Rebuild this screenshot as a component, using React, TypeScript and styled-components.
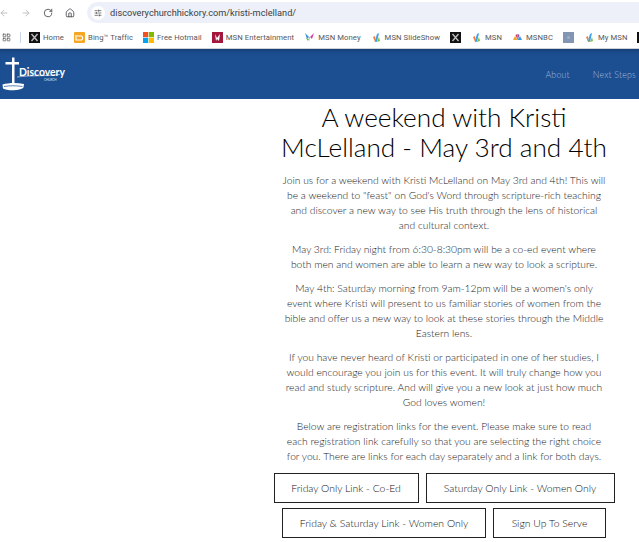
import React from "react";
import styled, { createGlobalStyle } from "styled-components";
import { ArrowLeft, ArrowRight, RotateCw, House, LayoutGrid, SlidersHorizontal } from "lucide-react";

const Global = createGlobalStyle`
  html, body { margin: 0; padding: 0; background: #fff; overflow: hidden; }
  body { font-family: "Lato", "Liberation Sans", sans-serif; }
`;
const Page = styled.div`width: 639px; height: 542px; overflow: hidden;`;
const Toolbar = styled.div`
  display: flex; align-items: center; height: 26px; box-sizing: border-box; background: #fff;
`;
const NavGroup = styled.div`
  display: flex; align-items: center; gap: 10px; width: 89px; margin-left: -2px; box-sizing: border-box; flex: none;
`;
const NavIcon = styled.span<{ $dim?: boolean }>`
  display: flex; width: 12px; justify-content: center; color: ${p => (p.$dim ? "#b4b6ba" : "#45474a")};
`;
const Omnibox = styled.div`
  flex: 1; height: 21px; margin-top: -1px; background: #edf0f9; border-radius: 11px 0 0 11px;
  display: flex; align-items: center; gap: 5px; padding-left: 4px;
  font: 400 9.2px "Roboto", sans-serif; color: #3b3e44;
`;
const SiteBadge = styled.span`
  width: 14px; height: 14px; border-radius: 50%; background: #fff; display: flex; align-items: center; justify-content: center; color: #444;
`;
const Bookmarks = styled.div`
  display: flex; align-items: center; height: 23px; padding-left: 2px; white-space: nowrap; overflow: hidden;
  border-bottom: 1px solid #cfd2d6; box-sizing: border-box; background: #fff;
`;
const Separator = styled.span`width: 1px; height: 11px; background: #c9d8ea; margin: 0 8px 0 9px; flex: none;`;
const Mark = styled.span`
  display: flex; align-items: center; gap: 3px; margin-right: 10px; flex: none;
  font: 400 7.7px "Roboto", sans-serif; letter-spacing: .08px; color: #55575b;
`;
const Favicon = styled.svg`width: 11px; height: 11px; flex: none; display: block;`;
const Header = styled.header`
  height: 50px; background: #1c4f92; display: flex; align-items: center; justify-content: space-between;
  box-shadow: inset 0 5px 5px -4px rgba(0,0,0,.3);
`;
const NavLinks = styled.nav`display: flex; gap: 23px; margin-right: 3px; margin-top: 1px;`;
const NavLink = styled.a`
  font: 300 8.8px "Lato", sans-serif; letter-spacing: .2px; color: #a3b8d8;
`;
const LogoWrap = styled.div`position: relative; width: 70px; height: 50px; flex: none;`;
const LogoWord = styled.span`
  position: absolute; left: 19px; top: 17px; font: 700 10.4px "Lato", sans-serif; color: #fff;
`;
const LogoSub = styled.span`
  position: absolute; left: 44px; top: 29px; font: 400 3px "Lato", sans-serif; color: #dbe5f2;
`;
const Main = styled.main`
  display: grid; grid-template-columns: 269px 350px;
`;
const Content = styled.article`
  grid-column: 2; text-align: center; padding-top: 3px; white-space: nowrap;
`;
const Title = styled.h1`
  margin: 0 0 11px; font: 300 26.2px/30px "Lato", sans-serif; color: #000;
`;
const Para = styled.p`
  margin: 0 0 9px; font: 300 10.3px/15px "Lato", sans-serif; color: #222;
`;
const Buttons = styled.div`
  display: flex; flex-wrap: wrap; justify-content: center; gap: 5px 7px; margin: 0 -5px;
`;
const LinkButton = styled.a<{ $w: number }>`
  box-sizing: border-box; width: ${p => p.$w}px; height: 30px; display: flex; align-items: center; justify-content: center;
  border: 1.5px solid #222; background: #fff;
  font: 300 10.4px "Lato", sans-serif; color: #111;
`;

const XIcon = () => (
  <Favicon viewBox="0 0 11 11"><rect width="11" height="11" fill="#111" /><path d="M2.5 2 L8.5 9 M8.5 2 L2.5 9" stroke="#bbb" strokeWidth="1.4" /></Favicon>
);
const MsnIcon = () => (
  <Favicon viewBox="0 0 11 11">
    <path d="M2 5 L4 10 L5 10 L4 4 Z" fill="#f0803c" /><path d="M4 9 L6 2 L8 1 L6 10 Z" fill="#3aa0e8" /><path d="M6 10 L8 5 L9 9 Z" fill="#7cc04b" />
  </Favicon>
);
const Bing = () => (
  <Favicon viewBox="0 0 11 11"><rect width="11" height="11" rx="1" fill="#f5a623" /><path d="M2 3 V8 H7.5 A2.3 2.3 0 0 0 7.5 4 H3" fill="none" stroke="#fff" strokeWidth="1.2" /></Favicon>
);
const Windows = () => (
  <Favicon viewBox="0 0 11 11"><rect width="5.2" height="5.2" fill="#f25022" /><rect x="5.8" width="5.2" height="5.2" fill="#7fba00" /><rect y="5.8" width="5.2" height="5.2" fill="#00a4ef" /><rect x="5.8" y="5.8" width="5.2" height="5.2" fill="#ffb900" /></Favicon>
);
const Ent = () => (
  <Favicon viewBox="0 0 11 11"><rect width="11" height="11" fill="#a3173d" /><path d="M3 2 L5 6 L8 2 L7 9 L5 7 L4 9 Z" fill="#fff" /></Favicon>
);
const Butterfly = () => (
  <Favicon viewBox="0 0 11 11"><path d="M1 1 L5 5 L3 7 Z" fill="#2f8fe0" /><path d="M10 1 L6 5 L8 7 Z" fill="#d63fa5" /><path d="M5 5 L6 5 L5.5 10 Z" fill="#f2a32c" /><path d="M2 6 L5 7 L4 9 Z" fill="#58b947" /></Favicon>
);
const Nbc = () => (
  <Favicon viewBox="0 0 11 11"><path d="M5.5 8 L1 8 L3 4 Z" fill="#f2a32c" /><path d="M5.5 8 L3.5 3 L5.5 2 Z" fill="#d8344a" /><path d="M5.5 8 L5.8 2 L7.5 3 Z" fill="#7f4fb0" /><path d="M5.5 8 L8 4 L10 8 Z" fill="#3a9ad9" /></Favicon>
);
const Gray = () => (
  <Favicon viewBox="0 0 11 11"><rect width="11" height="11" fill="#8296b4" /><circle cx="5.5" cy="5.5" r="1.5" fill="#9fb0c8" /></Favicon>
);

const Logo = () => (
  <LogoWrap>
    <svg width="70" height="50" viewBox="0 0 70 50" style={{ display: "block" }}>
      <path d="M12 8.5 H14.5 V13 H19 V15.5 H14.5 V35 H12 V15.5 H5.5 V13 H12 Z" fill="#fff" />
      <path d="M17 28 C30 26 45 27.5 60 25.5" stroke="#fff" strokeWidth=".7" fill="none" opacity=".8" />
      <path d="M2.5 35.5 C9 33.5 17 33.5 24 35 L23.5 38.5 C20 42 7 42 3 39.5 Z" fill="#fff" />
      <path d="M4 37.5 C10 36.5 16 36.5 22.5 37.5" stroke="#1c4f92" strokeWidth=".7" fill="none" />
    </svg>
    <LogoWord>Discovery</LogoWord>
    <LogoSub>CHURCH</LogoSub>
  </LogoWrap>
);

export default function App() {
  return (
    <Page>
      <Global />
      <Toolbar>
        <NavGroup>
          <NavIcon $dim><ArrowLeft size={10} /></NavIcon>
          <NavIcon $dim><ArrowRight size={10} /></NavIcon>
          <NavIcon><RotateCw size={10} /></NavIcon>
          <NavIcon><House size={10} /></NavIcon>
        </NavGroup>
        <Omnibox>
          <SiteBadge><SlidersHorizontal size={8} /></SiteBadge>
          discoverychurchhickory.com/kristi-mclelland/
        </Omnibox>
      </Toolbar>
      <Bookmarks>
        <LayoutGrid size={9} color="#555" style={{ flex: "none" }} />
        <Separator />
        <Mark><XIcon />Home</Mark>
        <Mark><Bing />Bing™ Traffic</Mark>
        <Mark><Windows />Free Hotmail</Mark>
        <Mark><Ent />MSN Entertainment</Mark>
        <Mark><Butterfly />MSN Money</Mark>
        <Mark><MsnIcon />MSN SlideShow</Mark>
        <Mark><XIcon /></Mark>
        <Mark><MsnIcon />MSN</Mark>
        <Mark><Nbc />MSNBC</Mark>
        <Mark><Gray /></Mark>
        <Mark><MsnIcon />My MSN</Mark>
        <Mark><XIcon /></Mark>
      </Bookmarks>
      <Header>
        <Logo />
        <NavLinks>
          <NavLink>About</NavLink>
          <NavLink>Next Steps</NavLink>
        </NavLinks>
      </Header>
      <Main>
        <Content>
          <Title>A weekend with Kristi<br />McLelland - May 3rd and 4th</Title>
          <Para>Join us for a weekend with Kristi McLelland on May 3rd and 4th! This will<br />be a weekend to "feast" on God's Word through scripture-rich teaching<br />and discover a new way to see His truth through the lens of historical<br />and cultural context.</Para>
          <Para>May 3rd: Friday night from 6:30-8:30pm will be a co-ed event where<br />both men and women are able to learn a new way to look a scripture.</Para>
          <Para>May 4th: Saturday morning from 9am-12pm will be a women's only<br />event where Kristi will present to us familiar stories of women from the<br />bible and offer us a new way to look at these stories through the Middle<br />Eastern lens.</Para>
          <Para>If you have never heard of Kristi or participated in one of her studies, I<br />would encourage you join us for this event. It will truly change how you<br />read and study scripture. And will give you a new look at just how much<br />God loves women!</Para>
          <Para>Below are registration links for the event. Please make sure to read<br />each registration link carefully so that you are selecting the right choice<br />for you. There are links for each day separately and a link for both days.</Para>
          <Buttons>
            <LinkButton $w={145}>Friday Only Link - Co-Ed</LinkButton>
            <LinkButton $w={189}>Saturday Only Link - Women Only</LinkButton>
            <LinkButton $w={204}>Friday &amp; Saturday Link - Women Only</LinkButton>
            <LinkButton $w={113}>Sign Up To Serve</LinkButton>
          </Buttons>
        </Content>
      </Main>
    </Page>
  );
}
